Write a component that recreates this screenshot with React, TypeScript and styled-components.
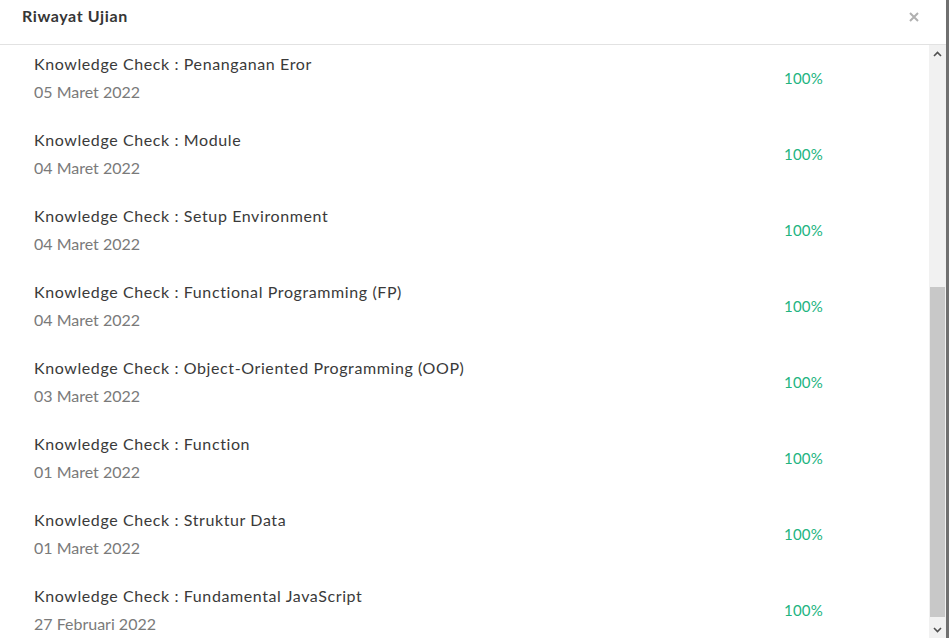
import React from 'react'
import styled, { createGlobalStyle } from 'styled-components'

const GlobalStyle = createGlobalStyle`
  html, body {
    margin: 0;
    padding: 0;
    height: 100%;
    overflow: hidden;
    background: #707070;
  }
  #root {
    height: 100%;
  }
`

const Page = styled.div`
  display: flex;
  height: 638px;
  font-family: 'Lato', 'Noto Sans', sans-serif;
`

const Modal = styled.div`
  width: 946px;
  height: 100%;
  background: #ffffff;
  display: flex;
  flex-direction: column;
`

const Header = styled.div`
  height: 44px;
  flex-shrink: 0;
  display: flex;
  align-items: center;
  justify-content: space-between;
  padding: 0 26px 0 22px;
  border-bottom: 1px solid #e2e2e2;
`

const Title = styled.h2`
  margin: 0 0 13px;
  font-size: 16px;
  font-weight: 700;
  letter-spacing: 0.6px;
  color: #363636;
`

const CloseButton = styled.button`
  border: 0;
  background: none;
  padding: 0;
  margin-bottom: 11px;
  width: 12px;
  height: 12px;
  display: flex;
  align-items: center;
  justify-content: center;
  cursor: pointer;
`

const Body = styled.div`
  flex: 1;
  display: flex;
  min-height: 0;
`

const List = styled.div`
  flex: 1;
  overflow: hidden;
  padding-top: 5px;
`

const Row = styled.div`
  display: flex;
  align-items: center;
  height: 76px;
  padding: 0 0 20px 34px;
  box-sizing: border-box;
`

const Info = styled.div`
  flex: 1;
  display: flex;
  flex-direction: column;
`

const ItemName = styled.div`
  font-size: 16px;
  line-height: 28px;
  letter-spacing: 0.6px;
  color: #3a3a3a;
`

const ItemDate = styled.div`
  font-size: 16px;
  line-height: 28px;
  color: #7a7a7a;
`

const Score = styled.div`
  width: 145px;
  font-size: 15px;
  letter-spacing: 0.2px;
  color: #22b47f;
`

const Scrollbar = styled.div`
  width: 17px;
  display: flex;
  flex-direction: column;
  background: #f1f1f1;
`

const ArrowBox = styled.div`
  height: 17px;
  display: flex;
  align-items: center;
  justify-content: center;
`

const Track = styled.div`
  flex: 1;
  display: flex;
  flex-direction: column;
`

const Thumb = styled.div<{ $offset: number; $size: number }>`
  margin: ${({ $offset }) => $offset}px 1px 0 1px;
  height: ${({ $size }) => $size}px;
  background: #c8c8c8;
`

const items = [
  { name: 'Penanganan Eror', date: '05 Maret 2022' },
  { name: 'Module', date: '04 Maret 2022' },
  { name: 'Setup Environment', date: '04 Maret 2022' },
  { name: 'Functional Programming (FP)', date: '04 Maret 2022' },
  { name: 'Object-Oriented Programming (OOP)', date: '03 Maret 2022' },
  { name: 'Function', date: '01 Maret 2022' },
  { name: 'Struktur Data', date: '01 Maret 2022' },
  { name: 'Fundamental JavaScript', date: '27 Februari 2022' },
]

function Arrow({ up }: { up?: boolean }) {
  return (
    <svg width="9" height="6" viewBox="0 0 9 6">
      <path
        d={up ? 'M1 5 L4.5 1.5 L8 5' : 'M1 1 L4.5 4.5 L8 1'}
        fill="none"
        stroke="#505050"
        strokeWidth="1.6"
      />
    </svg>
  )
}

export default function App() {
  return (
    <>
      <GlobalStyle />
      <Page>
        <Modal>
          <Header>
            <Title>Riwayat Ujian</Title>
            <CloseButton aria-label="Tutup">
              <svg width="10" height="10" viewBox="0 0 10 10">
                <path d="M1 1 L9 9 M9 1 L1 9" stroke="#b0b0b0" strokeWidth="2" />
              </svg>
            </CloseButton>
          </Header>
          <Body>
            <List>
              {items.map((item) => (
                <Row key={item.name}>
                  <Info>
                    <ItemName>Knowledge Check : {item.name}</ItemName>
                    <ItemDate>{item.date}</ItemDate>
                  </Info>
                  <Score>100%</Score>
                </Row>
              ))}
            </List>
            <Scrollbar>
              <ArrowBox>
                <Arrow up />
              </ArrowBox>
              <Track>
                <Thumb $offset={225} $size={330} />
              </Track>
              <ArrowBox>
                <Arrow />
              </ArrowBox>
            </Scrollbar>
          </Body>
        </Modal>
      </Page>
    </>
  )
}
